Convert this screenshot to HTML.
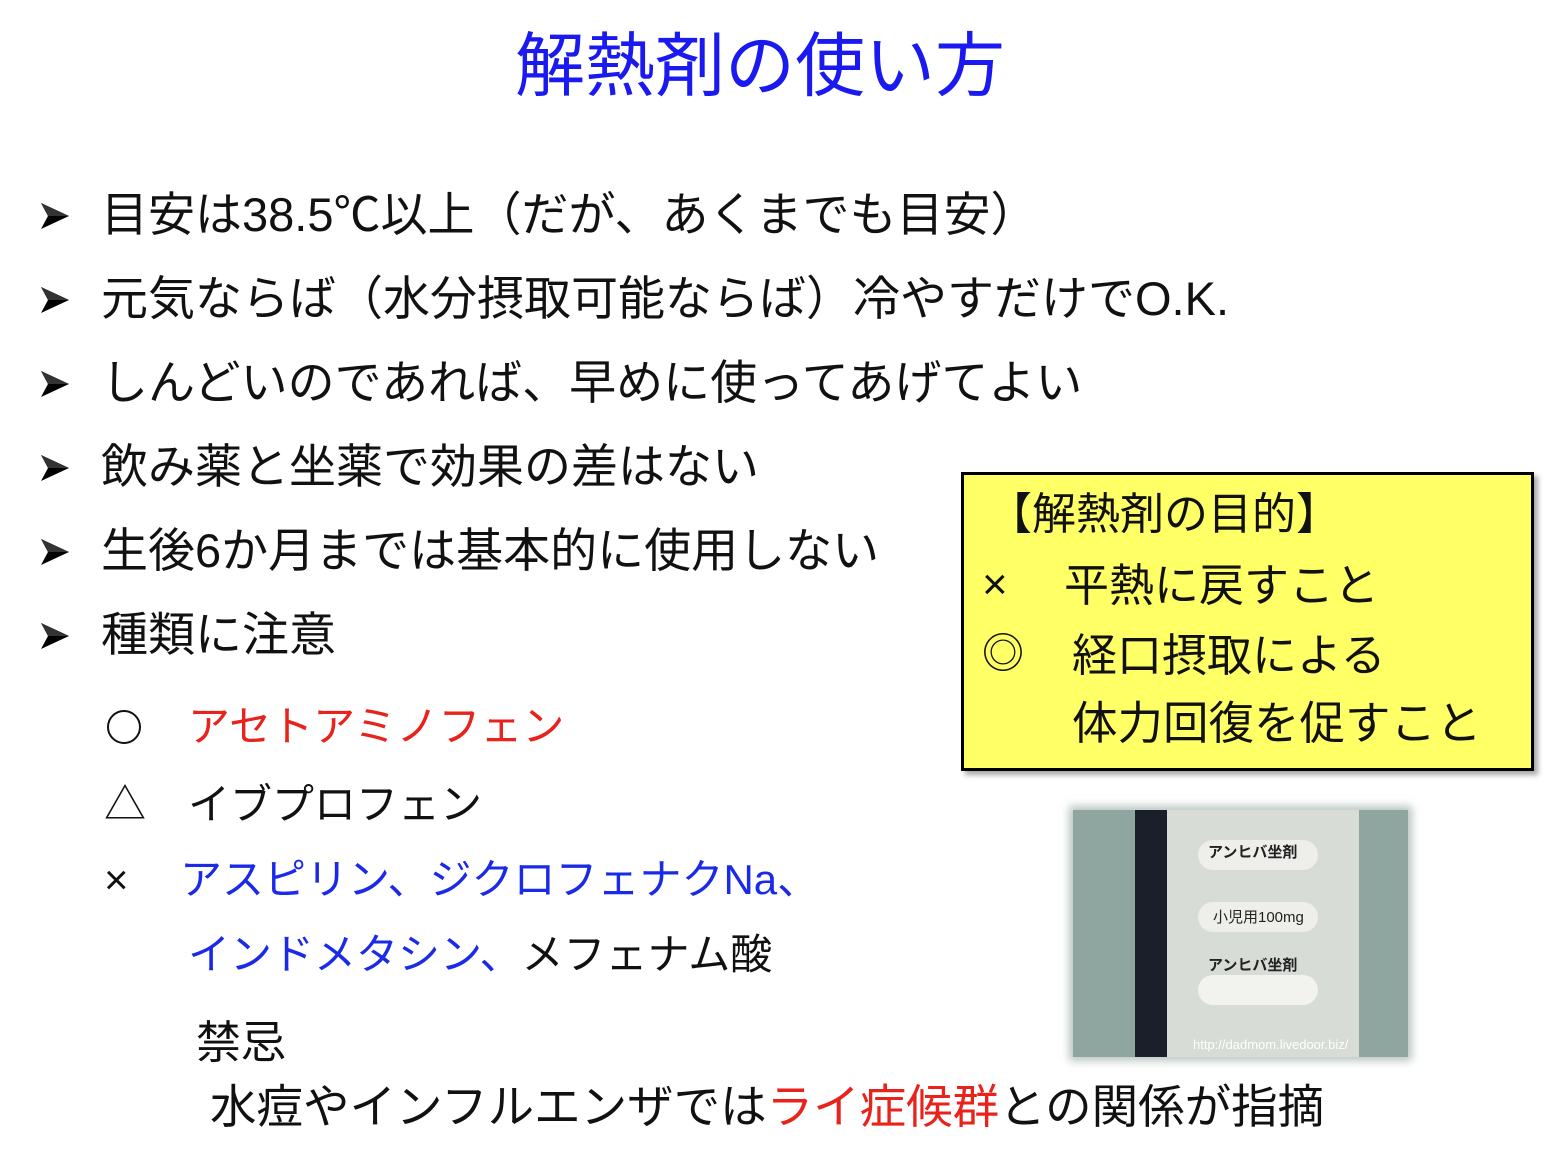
<!DOCTYPE html>
<html><head><meta charset="utf-8"><style>
body{margin:0;width:1546px;height:1158px;background:#fff;position:relative;overflow:hidden;font-family:"Liberation Sans","Noto Sans CJK JP",sans-serif;color:#111}
.a{position:absolute;white-space:nowrap;line-height:1}
.t{font-size:70px;color:#1a1af0;left:515px;top:31px}
.b{font-size:47px;left:101px}
.m{position:absolute;left:40px;width:30px;height:28px}
.s{font-size:42px}
.r{color:#e8231c}.bl{color:#1a2ae8}
.box{position:absolute;left:961px;top:472px;width:567px;height:293px;background:#ffff66;border:3px solid #000;box-shadow:4px 4px 5px rgba(0,0,0,.35)}
.box .a{font-size:44px}
.ph{position:absolute;left:1073px;top:810px;width:335px;height:247px;background:#8fa5a0;box-shadow:0 0 8px 4px rgba(140,160,155,.6);overflow:hidden}
</style></head><body>
<div class="a t">解熱剤の使い方</div>
<svg width="0" height="0" style="position:absolute"><defs><symbol id="ar" viewBox="0 0 30 28"><path d="M1 1 L29 14 L1 27 L8 14 Z" fill="#000"/><path d="M1 1 L29 14 L8 14 Z" fill="#333"/></symbol></defs></svg>
<svg class="m" style="top:202px"><use href="#ar"/></svg><div class="a b" style="top:191px">目安は38.5℃以上（だが、あくまでも目安）</div>
<svg class="m" style="top:286px"><use href="#ar"/></svg><div class="a b" style="top:275px">元気ならば（水分摂取可能ならば）冷やすだけでO.K.</div>
<svg class="m" style="top:370px"><use href="#ar"/></svg><div class="a b" style="top:359px">しんどいのであれば、早めに使ってあげてよい</div>
<svg class="m" style="top:454px"><use href="#ar"/></svg><div class="a b" style="top:443px">飲み薬と坐薬で効果の差はない</div>
<svg class="m" style="top:538px"><use href="#ar"/></svg><div class="a b" style="top:527px">生後6か月までは基本的に使用しない</div>
<svg class="m" style="top:622px"><use href="#ar"/></svg><div class="a b" style="top:611px">種類に注意</div>
<div style="position:absolute;left:107px;top:710px;width:30px;height:30px;border:2px solid #111;border-radius:50%"></div><div class="a s r" style="left:188px;top:706px">アセトアミノフェン</div>
<div class="a s" style="left:104px;top:784px">△</div><div class="a s" style="left:188px;top:784px">イブプロフェン</div>
<div class="a s" style="left:104px;top:859px">×</div><div class="a s bl" style="left:180px;top:859px">アスピリン、ジクロフェナクNa、</div>
<div class="a s" style="left:188px;top:934px"><span class="bl">インドメタシン、</span>メフェナム酸</div>
<div class="a" style="left:196px;top:1020px;font-size:45px">禁忌</div>
<div class="a" style="left:210px;top:1084px;font-size:46.5px">水痘やインフルエンザでは<span class="r">ライ症候群</span>との関係が指摘</div>
<div class="box">
<div class="a" style="left:24px;top:18px">【解熱剤の目的】</div>
<div class="a" style="left:18px;top:88px">×</div><div class="a" style="left:100px;top:88px;font-size:45px">平熱に戻すこと</div>
<div class="a" style="left:18px;top:158px;font-size:42px">◎</div><div class="a" style="left:108px;top:158px;font-size:45px">経口摂取による</div>
<div class="a" style="left:108px;top:226px;font-size:45.5px">体力回復を促すこと</div>
</div>
<div class="ph">
<div style="position:absolute;left:62px;top:0;width:32px;height:247px;background:#1a1f2a"></div>
<div style="position:absolute;left:94px;top:0;width:192px;height:247px;background:#d8dcd6"></div>
<div style="position:absolute;left:125px;top:30px;width:120px;height:30px;border-radius:15px;background:#eeeeea"></div>
<div style="position:absolute;left:125px;top:92px;width:120px;height:30px;border-radius:15px;background:#eeeeea"></div>
<div style="position:absolute;left:125px;top:165px;width:120px;height:30px;border-radius:15px;background:#f2f2ee"></div>
<div class="a" style="left:135px;top:35px;font-size:15px;font-weight:bold;color:#222">アンヒバ坐剤</div>
<div class="a" style="left:140px;top:100px;font-size:15px;color:#222">小児用100mg</div>
<div class="a" style="left:135px;top:148px;font-size:15px;font-weight:bold;color:#222">アンヒバ坐剤</div>
<div class="a" style="left:120px;top:228px;font-size:13px;color:#fff">http://dadmom.livedoor.biz/</div>
</div>
</body></html>
